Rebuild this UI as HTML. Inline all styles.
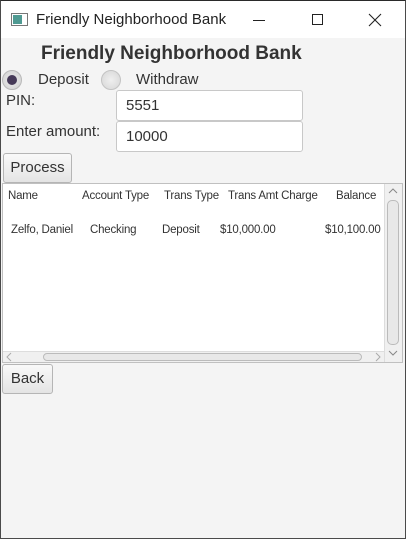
<!DOCTYPE html>
<html><head><meta charset="utf-8"><style>
*{margin:0;padding:0;box-sizing:border-box}
body{width:406px;height:539px;background:#f4f4f4;font-family:"Liberation Sans",sans-serif;position:relative;overflow:hidden;border:1px solid #4a4a4a;border-top:1px solid #2a2a2a}
.a{position:absolute;white-space:nowrap}
#tb{left:0;top:0;width:404px;height:37px;background:#fff}
.btn{position:absolute;border:1px solid #b5b5b5;border-radius:3px;background:linear-gradient(#f9f9f9,#e4e4e4);font-size:15px;color:#333;text-align:center}
.tf{position:absolute;background:#fff;border:1px solid #c8c8c8;border-radius:3px;font-size:15px;color:#333;padding-left:9px}
.th,.td{position:absolute;font-size:11.5px;color:#333;letter-spacing:-0.2px}
</style></head><body>
<div id="tb" class="a"></div>
<div class="a" style="left:10px;top:12px;width:17px;height:13px;border:1px solid #777;background:#fff"></div>
<div class="a" style="left:12px;top:14px;width:9px;height:9px;background:#4f9a92"></div>
<div class="a" style="left:35px;top:10px;font-size:15px;color:#222">Friendly Neighborhood Bank</div>
<div class="a" style="left:252px;top:19px;width:12px;height:1px;background:#222"></div>
<div class="a" style="left:311px;top:13px;width:11px;height:11px;border:1px solid #222"></div>
<svg class="a" style="left:367px;top:12px" width="14" height="14"><path d="M1 1L13 13M13 1L1 13" stroke="#222" stroke-width="1.1"/></svg>
<div class="a" style="left:40px;top:42px;font-size:19px;font-weight:bold;color:#333">Friendly Neighborhood Bank</div>
<div class="a" style="left:1px;top:69px;width:20px;height:20px;border-radius:50%;background:radial-gradient(#ececec,#d0d0d0);border:1px solid #b9b9b9"></div>
<div class="a" style="left:6px;top:74px;width:10px;height:10px;border-radius:50%;background:#463a58"></div>
<div class="a" style="left:37px;top:70px;font-size:15px;color:#333">Deposit</div>
<div class="a" style="left:100px;top:69px;width:20px;height:20px;border-radius:50%;background:radial-gradient(#efefef,#d6d6d6);border:1px solid #c3c3c3"></div>
<div class="a" style="left:135px;top:70px;font-size:15px;color:#333">Withdraw</div>
<div class="a" style="left:5px;top:91px;font-size:15px;color:#333">PIN:</div>
<div class="tf" style="left:115px;top:89px;width:187px;height:31px;line-height:29px">5551</div>
<div class="a" style="left:5px;top:122px;font-size:15px;color:#333">Enter amount:</div>
<div class="tf" style="left:115px;top:120px;width:187px;height:31px;line-height:29px">10000</div>
<div class="btn" style="left:2px;top:152px;width:69px;height:30px;line-height:28px">Process</div>
<div class="a" style="left:1px;top:182px;width:401px;height:180px;border:1px solid #c0c0c0;background:#fff"></div>
<div class="th" style="left:7px;top:189px">Name</div>
<div class="th" style="left:81px;top:189px">Account Type</div>
<div class="th" style="left:163px;top:189px">Trans Type</div>
<div class="th" style="left:227px;top:189px">Trans Amt Charge</div>
<div class="th" style="left:335px;top:189px">Balance</div>
<div class="td" style="left:10px;top:223px">Zelfo, Daniel</div>
<div class="td" style="left:89px;top:223px">Checking</div>
<div class="td" style="left:161px;top:223px">Deposit</div>
<div class="td" style="left:219px;top:223px">$10,000.00</div>
<div class="td" style="left:324px;top:223px">$10,100.00</div>
<div class="a" style="left:383px;top:183px;width:18px;height:178px;background:#f0f0f0;border-left:1px solid #ddd"></div>
<div class="a" style="left:386px;top:199px;width:12px;height:145px;border:1px solid #bbb;border-radius:5px;background:#e8e8e8"></div>
<svg class="a" style="left:387px;top:186px" width="10" height="8"><path d="M1 6L5 2L9 6" stroke="#888" fill="none"/></svg>
<svg class="a" style="left:387px;top:348px" width="10" height="8"><path d="M1 2L5 6L9 2" stroke="#888" fill="none"/></svg>
<div class="a" style="left:2px;top:350px;width:381px;height:11px;background:#f0f0f0;border-top:1px solid #ddd"></div>
<div class="a" style="left:42px;top:352px;width:319px;height:8px;border:1px solid #bbb;border-radius:4px;background:#e8e8e8"></div>
<svg class="a" style="left:5px;top:351px" width="6" height="10"><path d="M5 1L1 5L5 9" stroke="#aaa" fill="none"/></svg>
<svg class="a" style="left:374px;top:351px" width="6" height="10"><path d="M1 1L5 5L1 9" stroke="#aaa" fill="none"/></svg>
<div class="btn" style="left:1px;top:363px;width:51px;height:30px;line-height:28px">Back</div>
</body></html>
